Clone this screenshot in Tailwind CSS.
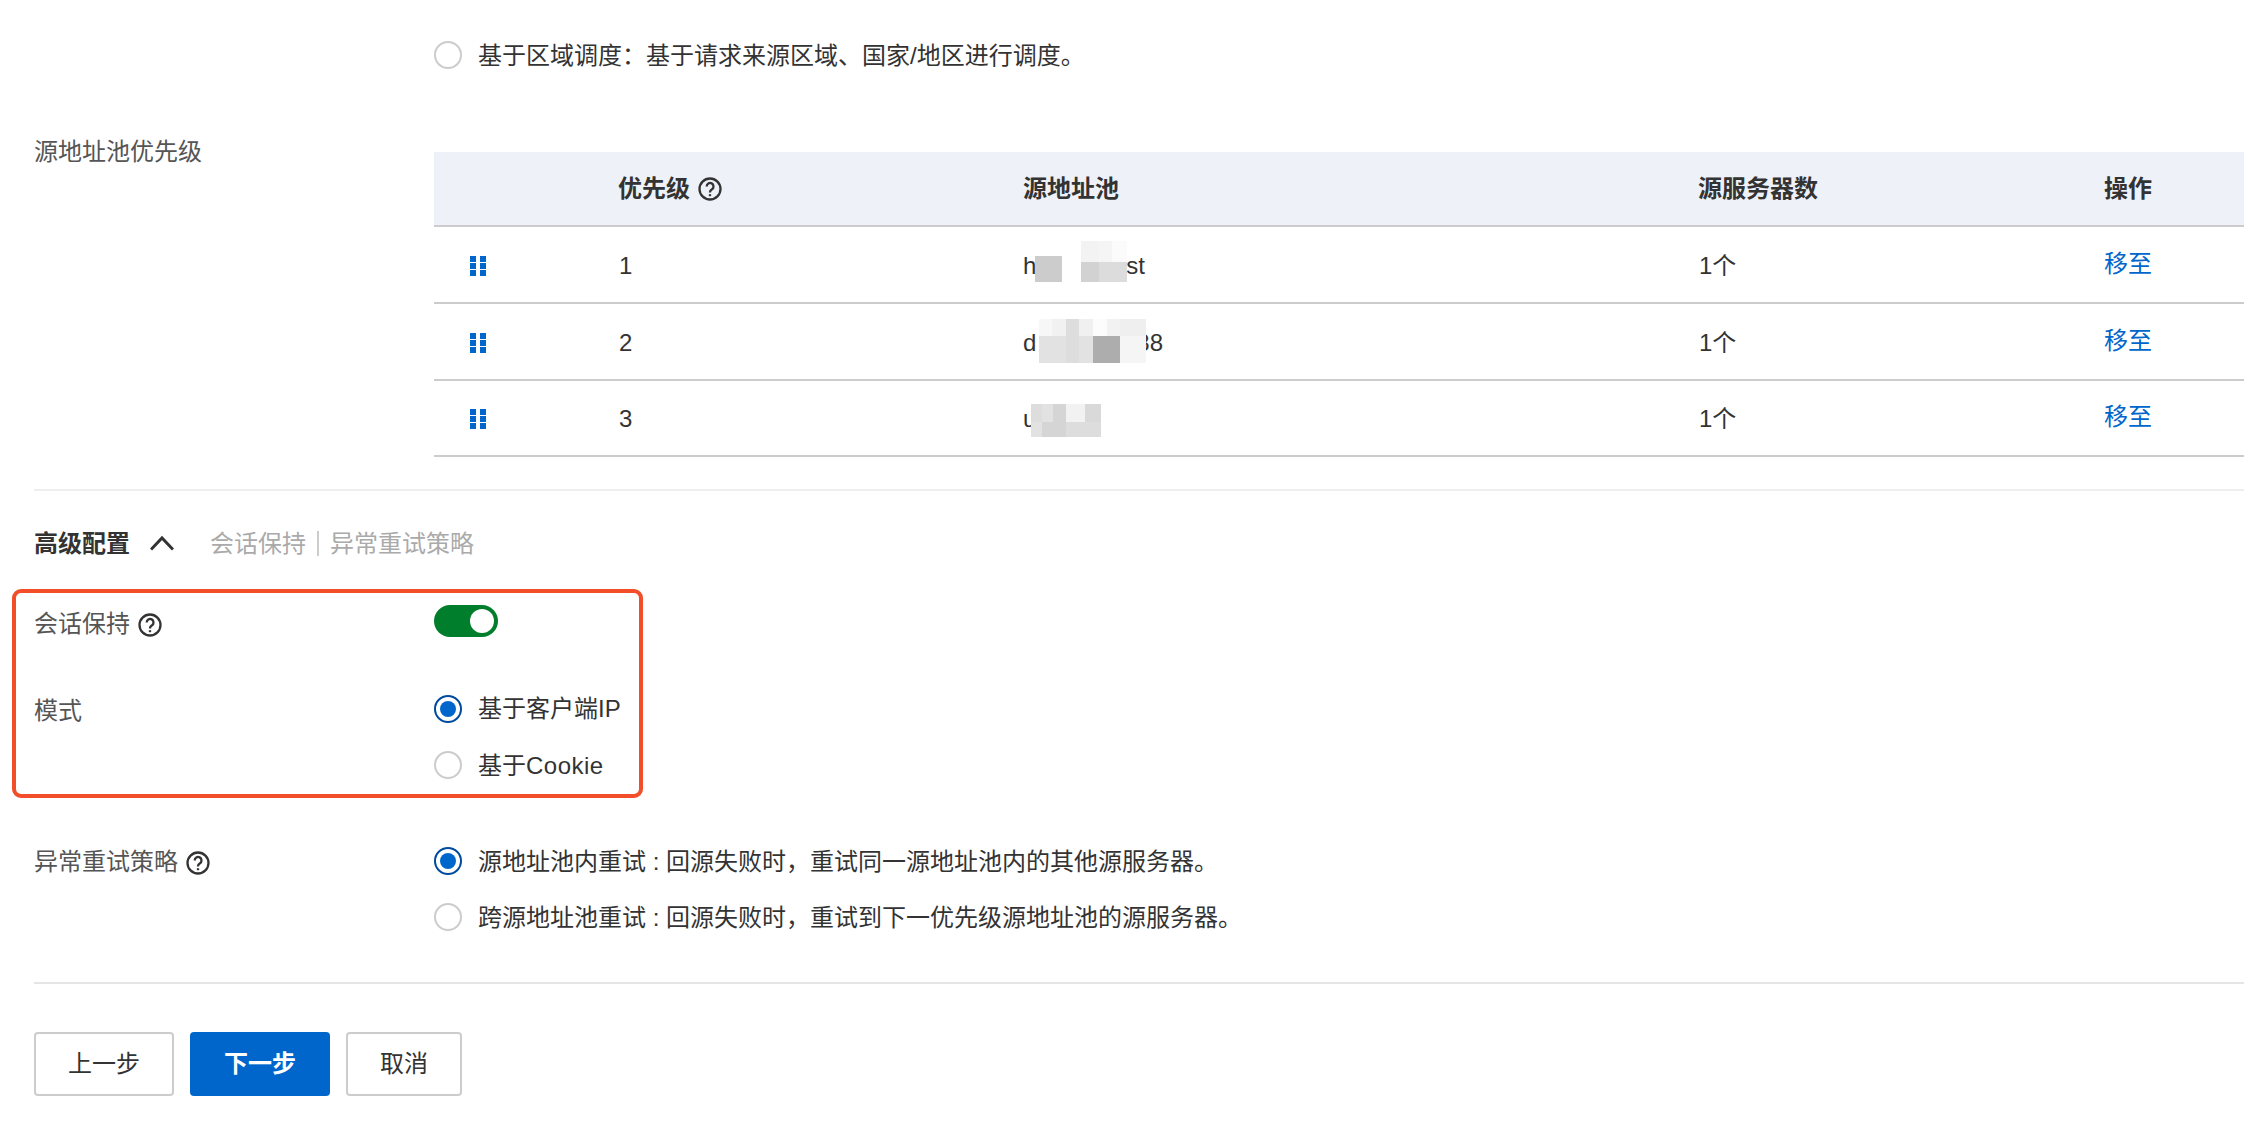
<!DOCTYPE html>
<html lang="zh-CN">

<head>
    <meta charset="UTF-8">
    <title>源站配置</title>
    <script src="https://cdn.jsdelivr.net/npm/@tailwindcss/browser@4"></script>
</head>

<body class="bg-white">
    <div class="relative h-[1148px] w-[2244px] overflow-hidden pl-[34px] pt-[38px] text-[24px] leading-[34px] text-[#333] font-['Liberation_Sans','Noto_Sans_CJK_SC',sans-serif]">

        <!-- top radio -->
        <div class="ml-[400px] flex h-[34px] items-center gap-[16px]">
            <span class="h-[28px] w-[28px] rounded-full border-2 border-[#ccc]"></span>
            <span class="pt-[2px]">基于区域调度：基于请求来源区域、国家/地区进行调度。</span>
        </div>

        <!-- priority table -->
        <div class="mt-[63px] flex">
            <div class="w-[400px] shrink-0 text-[#555]">源地址池优先级</div>
            <table class="mt-[17px] w-[1810px] shrink-0 table-fixed border-collapse text-left">
                <colgroup>
                    <col class="w-[184px]">
                    <col class="w-[405px]">
                    <col class="w-[675px]">
                    <col class="w-[406px]">
                    <col class="w-[140px]">
                </colgroup>
                <thead>
                    <tr class="h-[74px] border-b-2 border-[#ccc] bg-[#eef1f8] font-semibold">
                        <th></th>
                        <th class="font-semibold">
                            <span class="flex items-center gap-[8px]">优先级
                                <svg class="h-[24px] w-[24px]" viewBox="0 0 24 24" fill="none" stroke="#333" stroke-width="2.3"><circle cx="12" cy="12" r="10.5"/><path d="M8.7 9.4a3.4 3.4 0 1 1 5.3 2.8c-1.3.8-2 1.4-2 2.9v.4"/><path d="M12 17.2v2" /></svg>
                            </span>
                        </th>
                        <th class="font-semibold">源地址池</th>
                        <th class="font-semibold">源服务器数</th>
                        <th class="font-semibold">操作</th>
                    </tr>
                </thead>
                <tbody class="[&_td]:pt-[2px]">
                    <tr class="h-[77px] border-b-2 border-[#ccc]">
                        <td class="pl-[36px]">
                            <span class="grid w-[16px] grid-cols-2 gap-x-[4px] gap-y-[1px]">
                                <i class="h-[6px] w-[6px] bg-[#0066cc]"></i><i class="h-[6px] w-[6px] bg-[#0066cc]"></i>
                                <i class="h-[6px] w-[6px] bg-[#0066cc]"></i><i class="h-[6px] w-[6px] bg-[#0066cc]"></i>
                                <i class="h-[6px] w-[6px] bg-[#0066cc]"></i><i class="h-[6px] w-[6px] bg-[#0066cc]"></i>
                            </span>
                        </td>
                        <td class="pl-[1px]">1</td>
                        <td>
                            <div class="relative flex">
                                <span>h</span><span class="w-[90px]"></span><span>st</span>
                                <!-- blurred-out name -->
                                <div class="absolute left-[12px] top-[7px] h-[26px] w-[27px] bg-[#ccc]"></div>
                                <div class="absolute left-[58px] top-[-8px] grid h-[41px] w-[46px] grid-cols-[18px_13px_15px] grid-rows-[21px_20px]">
                                    <i class="bg-[#f3f3f3]"></i><i class="bg-[#f5f5f5]"></i><i class="bg-[#fbfbfb]"></i>
                                    <i class="bg-[#d2d2d2]"></i><i class="bg-[#dcdcdc]"></i><i class="bg-[#dcdcdc]"></i>
                                </div>
                            </div>
                        </td>
                        <td class="pl-[1px]">1个</td>
                        <td class="pb-[4px] text-[#0066cc]">移至</td>
                    </tr>
                    <tr class="h-[77px] border-b-2 border-[#ccc]">
                        <td class="pl-[36px]">
                            <span class="grid w-[16px] grid-cols-2 gap-x-[4px] gap-y-[1px]">
                                <i class="h-[6px] w-[6px] bg-[#0066cc]"></i><i class="h-[6px] w-[6px] bg-[#0066cc]"></i>
                                <i class="h-[6px] w-[6px] bg-[#0066cc]"></i><i class="h-[6px] w-[6px] bg-[#0066cc]"></i>
                                <i class="h-[6px] w-[6px] bg-[#0066cc]"></i><i class="h-[6px] w-[6px] bg-[#0066cc]"></i>
                            </span>
                        </td>
                        <td class="pl-[1px]">2</td>
                        <td>
                            <div class="relative flex">
                                <span>d</span><span class="w-[100px]"></span><span>88</span>
                                <div class="absolute left-[16px] top-[-7px] grid h-[44px] w-[107px] grid-cols-[13px_14px_13px_14px_14px_13px_26px] grid-rows-[17px_27px]">
                                    <i class="bg-[#f7f7f7]"></i><i class="bg-[#f1f1f1]"></i><i class="bg-[#ddd]"></i><i class="bg-[#f0f0f0]"></i><i class="bg-[#fcfcfc]"></i><i class="bg-[#f2f2f2]"></i><i class="bg-[#efefef]"></i>
                                    <i class="bg-[#e2e2e2]"></i><i class="bg-[#e2e2e2]"></i><i class="bg-[#ddd]"></i><i class="bg-[#e2e2e2]"></i><i class="bg-[#adadad]"></i><i class="bg-[#adadad]"></i><i class="bg-[#f5f5f5]"></i>
                                </div>
                            </div>
                        </td>
                        <td class="pl-[1px]">1个</td>
                        <td class="pb-[4px] text-[#0066cc]">移至</td>
                    </tr>
                    <tr class="h-[76px] border-b-2 border-[#ccc]">
                        <td class="pl-[36px]">
                            <span class="grid w-[16px] grid-cols-2 gap-x-[4px] gap-y-[1px]">
                                <i class="h-[6px] w-[6px] bg-[#0066cc]"></i><i class="h-[6px] w-[6px] bg-[#0066cc]"></i>
                                <i class="h-[6px] w-[6px] bg-[#0066cc]"></i><i class="h-[6px] w-[6px] bg-[#0066cc]"></i>
                                <i class="h-[6px] w-[6px] bg-[#0066cc]"></i><i class="h-[6px] w-[6px] bg-[#0066cc]"></i>
                            </span>
                        </td>
                        <td class="pl-[1px]">3</td>
                        <td>
                            <div class="relative flex">
                                <span>u</span>
                                <div class="absolute left-[8px] top-[2px] grid h-[33px] w-[70px] grid-cols-[11px_11px_13px_19px_16px] grid-rows-[18px_15px]">
                                    <i class="bg-[#ddd]"></i><i class="bg-[#e2e2e2]"></i><i class="bg-[#d5d5d5]"></i><i class="bg-[#f2f2f2]"></i><i class="bg-[#d9d9d9]"></i>
                                    <i class="bg-[#e2e2e2]"></i><i class="bg-[#d5d5d5]"></i><i class="bg-[#d5d5d5]"></i><i class="bg-[#ddd]"></i><i class="bg-[#ddd]"></i>
                                </div>
                            </div>
                        </td>
                        <td class="pl-[1px]">1个</td>
                        <td class="pb-[4px] text-[#0066cc]">移至</td>
                    </tr>
                </tbody>
            </table>
        </div>

        <div class="mt-[32px] h-[2px] bg-[#eee]"></div>

        <!-- advanced header -->
        <div class="mt-[35px] flex h-[34px] items-center">
            <span class="pt-[2px] font-semibold">高级配置</span>
            <svg class="ml-[20px] h-[16px] w-[24px]" viewBox="0 0 24 16" fill="none" stroke="#333" stroke-width="3"><path d="M1 14.5 12 3l11 11.5"/></svg>
            <span class="ml-[36px] pt-[2px] text-[#aaa]">会话保持</span>
            <span class="ml-[11px] h-[25px] w-[2px] bg-[#ccc]"></span>
            <span class="ml-[11px] pt-[2px] text-[#aaa]">异常重试策略</span>
        </div>

        <!-- session persistence -->
        <div class="mt-[45px] flex">
            <div class="flex w-[400px] shrink-0 items-center gap-[8px] text-[#555]">
                <span class="pt-[2px]">会话保持</span>
                <svg class="mt-[4px] h-[24px] w-[24px]" viewBox="0 0 24 24" fill="none" stroke="#333" stroke-width="2.3"><circle cx="12" cy="12" r="10.5"/><path d="M8.7 9.4a3.4 3.4 0 1 1 5.3 2.8c-1.3.8-2 1.4-2 2.9v.4"/><path d="M12 17.2v2" /></svg>
            </div>
            <div class="flex h-[32px] w-[64px] items-center justify-end rounded-full bg-[#007e2b] pr-[4px]">
                <span class="h-[24px] w-[24px] rounded-full bg-white"></span>
            </div>
        </div>

        <!-- mode -->
        <div class="mt-[51px] flex">
            <div class="w-[400px] shrink-0 pt-[2px] text-[#555]">模式</div>
            <div class="flex flex-col gap-[22px]">
                <div class="flex h-[34px] items-center gap-[16px]">
                    <span class="flex h-[28px] w-[28px] items-center justify-center rounded-full border-2 border-[#004a9e]"><span class="h-[16px] w-[16px] rounded-full bg-[#0066cc]"></span></span>
                    <span>基于客户端IP</span>
                </div>
                <div class="flex h-[34px] items-center gap-[16px]">
                    <span class="h-[28px] w-[28px] rounded-full border-2 border-[#ccc]"></span>
                    <span class="pt-[2px]">基于<span class="tracking-[0.5px]">Cookie</span></span>
                </div>
            </div>
        </div>

        <!-- retry strategy -->
        <div class="mt-[62px] flex">
            <div class="flex w-[400px] shrink-0 items-start gap-[8px] text-[#555]">
                <span class="pt-[1px]">异常重试策略</span>
                <svg class="mt-[7px] h-[24px] w-[24px]" viewBox="0 0 24 24" fill="none" stroke="#333" stroke-width="2.3"><circle cx="12" cy="12" r="10.5"/><path d="M8.7 9.4a3.4 3.4 0 1 1 5.3 2.8c-1.3.8-2 1.4-2 2.9v.4"/><path d="M12 17.2v2" /></svg>
            </div>
            <div class="flex flex-col gap-[22px]">
                <div class="flex h-[34px] items-center gap-[16px]">
                    <span class="flex h-[28px] w-[28px] items-center justify-center rounded-full border-2 border-[#004a9e]"><span class="h-[16px] w-[16px] rounded-full bg-[#0066cc]"></span></span>
                    <span class="pt-[2px]">源地址池内重试 : 回源失败时，重试同一源地址池内的其他源服务器。</span>
                </div>
                <div class="flex h-[34px] items-center gap-[16px]">
                    <span class="h-[28px] w-[28px] rounded-full border-2 border-[#ccc]"></span>
                    <span class="pt-[2px]">跨源地址池重试 : 回源失败时，重试到下一优先级源地址池的源服务器。</span>
                </div>
            </div>
        </div>

        <div class="mt-[48px] h-[2px] bg-[#e5e5e5]"></div>

        <!-- footer buttons -->
        <div class="mt-[48px] flex gap-[16px]">
            <button class="h-[64px] w-[140px] rounded-[4px] border-2 border-[#ccc] bg-white">上一步</button>
            <button class="h-[64px] w-[140px] rounded-[4px] bg-[#0066cc] font-semibold text-white">下一步</button>
            <button class="h-[64px] w-[116px] rounded-[4px] border-2 border-[#ccc] bg-white">取消</button>
        </div>

        <!-- red highlight around the session settings -->
        <div class="absolute left-[12px] top-[589px] h-[209px] w-[631px] rounded-[9px] border-4 border-[#f24e29]"></div>
    </div>
</body>

</html>
